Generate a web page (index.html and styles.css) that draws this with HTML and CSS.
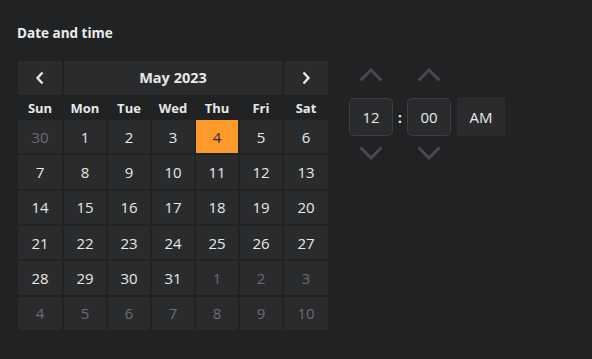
FILE: index.html
```html
<!DOCTYPE html>
<html>
    <head>
        <meta name="viewport" content="width=device-width, initial-scale=1">
        <link rel="stylesheet" href="styles.css">
    </head>
    <body>
        <div class="container">
            <h4 class="title">Date and time</h4>
            <div class="picker">
                <!-- Calendar -->
                <div class="calendar">
                    <button class="nav">
                        <svg width="10" height="14" viewBox="0 0 10 14"><path d="M7.5 1.5 L2.5 7 L7.5 12.5" fill="none" stroke="#e6e6e6" stroke-width="2.4"/></svg>
                    </button>
                    <div class="month">May 2023</div>
                    <button class="nav">
                        <svg width="10" height="14" viewBox="0 0 10 14"><path d="M2.5 1.5 L7.5 7 L2.5 12.5" fill="none" stroke="#e6e6e6" stroke-width="2.4"/></svg>
                    </button>
                    <div class="dayname">Sun</div>
                    <div class="dayname">Mon</div>
                    <div class="dayname">Tue</div>
                    <div class="dayname">Wed</div>
                    <div class="dayname">Thu</div>
                    <div class="dayname">Fri</div>
                    <div class="dayname">Sat</div>

                    <div class="day muted">30</div>
                    <div class="day">1</div>
                    <div class="day">2</div>
                    <div class="day">3</div>
                    <div class="day selected">4</div>
                    <div class="day">5</div>
                    <div class="day">6</div>

                    <div class="day">7</div>
                    <div class="day">8</div>
                    <div class="day">9</div>
                    <div class="day">10</div>
                    <div class="day">11</div>
                    <div class="day">12</div>
                    <div class="day">13</div>

                    <div class="day">14</div>
                    <div class="day">15</div>
                    <div class="day">16</div>
                    <div class="day">17</div>
                    <div class="day">18</div>
                    <div class="day">19</div>
                    <div class="day">20</div>

                    <div class="day">21</div>
                    <div class="day">22</div>
                    <div class="day">23</div>
                    <div class="day">24</div>
                    <div class="day">25</div>
                    <div class="day">26</div>
                    <div class="day">27</div>

                    <div class="day">28</div>
                    <div class="day">29</div>
                    <div class="day">30</div>
                    <div class="day">31</div>
                    <div class="day muted">1</div>
                    <div class="day muted">2</div>
                    <div class="day muted">3</div>

                    <div class="day muted">4</div>
                    <div class="day muted">5</div>
                    <div class="day muted">6</div>
                    <div class="day muted">7</div>
                    <div class="day muted">8</div>
                    <div class="day muted">9</div>
                    <div class="day muted">10</div>
                </div>

                <!-- Time -->
                <div class="time">
                    <button class="arrow up"><svg width="24" height="14" viewBox="0 0 24 14"><path d="M1.5 12.5 L12 2 L22.5 12.5" fill="none" stroke="#48494c" stroke-width="3"/></svg></button>
                    <span></span>
                    <button class="arrow up"><svg width="24" height="14" viewBox="0 0 24 14"><path d="M1.5 12.5 L12 2 L22.5 12.5" fill="none" stroke="#48494c" stroke-width="3"/></svg></button>
                    <span></span>

                    <div class="timebox">12</div>
                    <div class="colon">:</div>
                    <div class="timebox">00</div>
                    <div class="ampm">AM</div>

                    <button class="arrow down"><svg width="24" height="14" viewBox="0 0 24 14"><path d="M1.5 1.5 L12 12 L22.5 1.5" fill="none" stroke="#48494c" stroke-width="3"/></svg></button>
                    <span></span>
                    <button class="arrow down"><svg width="24" height="14" viewBox="0 0 24 14"><path d="M1.5 1.5 L12 12 L22.5 1.5" fill="none" stroke="#48494c" stroke-width="3"/></svg></button>
                    <span></span>
                </div>
            </div>
        </div>
    </body>
</html>
```

FILE: styles.css
```css
body {
  margin: 0;
  background-color: #212224;
  color: #e8e8e8;
  font-family: "Open Sans", "Noto Sans", sans-serif;
}

.container {
  padding: 24px 18px;
}

.title {
  margin: 0 0 18px -1px;
  font-size: 13.5px;
  font-weight: 700;
  line-height: 19px;
  color: #ececec;
}

.picker {
  display: flex;
  align-items: flex-start;
}

.calendar {
  display: grid;
  grid-template-columns: 44px repeat(5, 42px) 44px;
  grid-template-rows: 34px 21px repeat(6, 33.33px);
  gap: 2px;
  width: 310px;
}

.nav {
  background-color: #2a2b2d;
  border: none;
  padding: 0;
  display: flex;
  align-items: center;
  justify-content: center;
  cursor: pointer;
}

.month {
  grid-column: 2 / 7;
  background-color: #2a2b2d;
  display: flex;
  align-items: center;
  justify-content: center;
  padding-bottom: 2px;
  font-size: 14.5px;
  font-weight: 700;
}

.dayname {
  display: flex;
  align-items: center;
  justify-content: center;
  font-size: 13px;
  font-weight: 700;
}

.day {
  background-color: #2a2b2d;
  display: flex;
  align-items: center;
  justify-content: center;
  font-size: 15px;
}

.day.muted {
  color: #6c6d70;
}

.day.selected {
  background-color: #fd9a2b;
  color: #2c2c2c;
}

.time {
  display: grid;
  grid-template-columns: 44px 14px 44px 54px;
  grid-template-rows: 30px 38px 24px;
  margin-left: 21px;
  margin-top: 7px;
}

.arrow {
  background: none;
  border: none;
  padding: 0;
  display: flex;
  justify-content: center;
  cursor: pointer;
}

.arrow.up {
  align-items: flex-start;
}

.arrow.down {
  align-items: flex-end;
}

.timebox {
  background-color: #2a2b2d;
  border: 1px solid #3c3d40;
  border-radius: 5px;
  display: flex;
  align-items: center;
  justify-content: center;
  font-size: 15px;
}

.colon {
  display: flex;
  align-items: center;
  justify-content: center;
  font-size: 15px;
  font-weight: 700;
}

.ampm {
  margin-left: 6px;
  margin-top: -1px;
  background-color: #2a2b2d;
  display: flex;
  align-items: center;
  justify-content: center;
  font-size: 15px;
}
```
